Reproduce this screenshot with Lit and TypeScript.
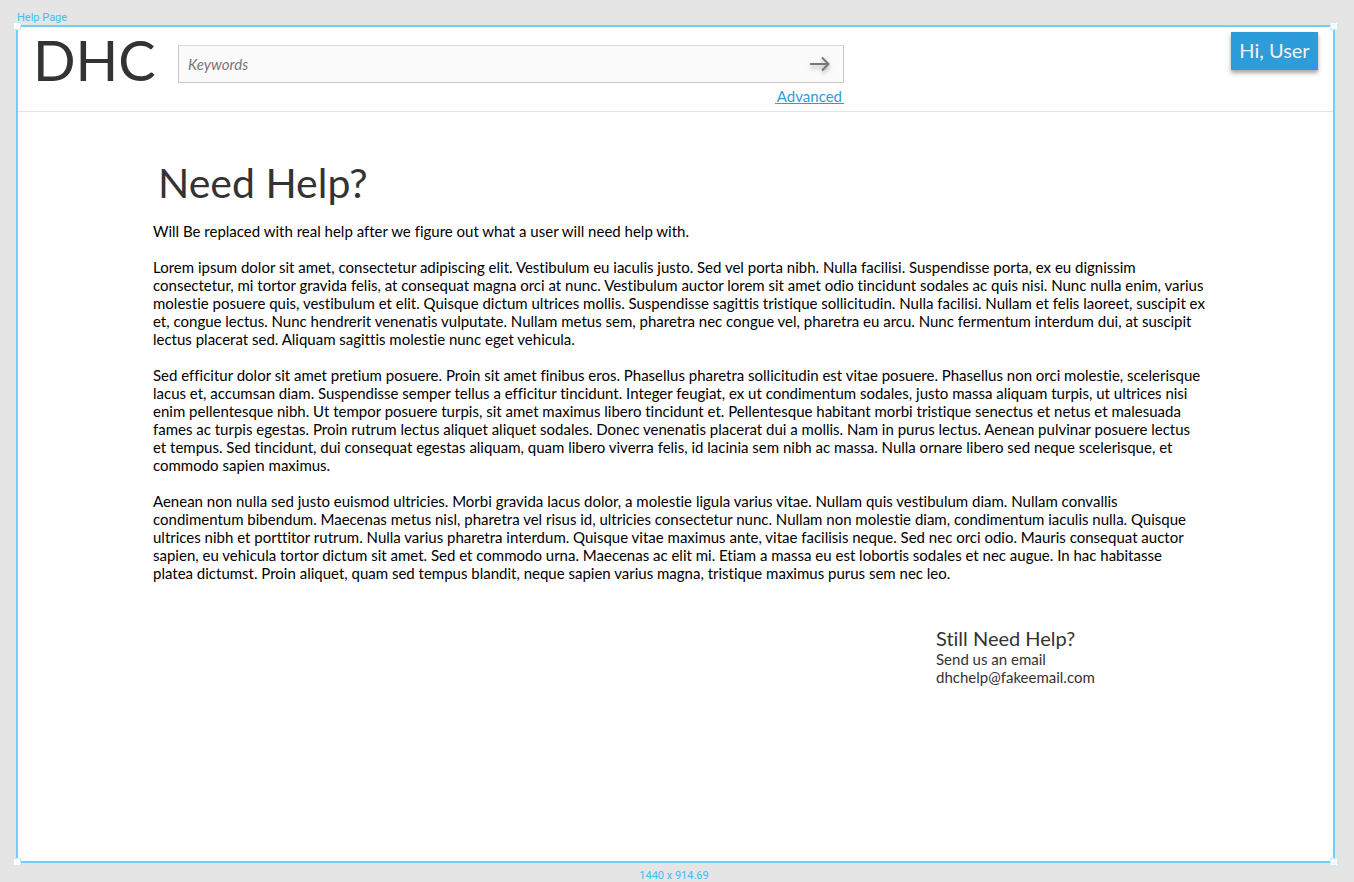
import { LitElement, html, css } from "lit";
import { customElement } from "lit/decorators.js";

const PARAGRAPHS: string[][] = [
  ["Will Be replaced with real help after we figure out what a user will need help with."],
  [
    "Lorem ipsum dolor sit amet, consectetur adipiscing elit. Vestibulum eu iaculis justo. Sed vel porta nibh. Nulla facilisi. Suspendisse porta, ex eu dignissim",
    "consectetur, mi tortor gravida felis, at consequat magna orci at nunc. Vestibulum auctor lorem sit amet odio tincidunt sodales ac quis nisi. Nunc nulla enim, varius",
    "molestie posuere quis, vestibulum et elit. Quisque dictum ultrices mollis. Suspendisse sagittis tristique sollicitudin. Nulla facilisi. Nullam et felis laoreet, suscipit ex",
    "et, congue lectus. Nunc hendrerit venenatis vulputate. Nullam metus sem, pharetra nec congue vel, pharetra eu arcu. Nunc fermentum interdum dui, at suscipit",
    "lectus placerat sed. Aliquam sagittis molestie nunc eget vehicula.",
  ],
  [
    "Sed efficitur dolor sit amet pretium posuere. Proin sit amet finibus eros. Phasellus pharetra sollicitudin est vitae posuere. Phasellus non orci molestie, scelerisque",
    "lacus et, accumsan diam. Suspendisse semper tellus a efficitur tincidunt. Integer feugiat, ex ut condimentum sodales, justo massa aliquam turpis, ut ultrices nisi",
    "enim pellentesque nibh. Ut tempor posuere turpis, sit amet maximus libero tincidunt et. Pellentesque habitant morbi tristique senectus et netus et malesuada",
    "fames ac turpis egestas. Proin rutrum lectus aliquet aliquet sodales. Donec venenatis placerat dui a mollis. Nam in purus lectus. Aenean pulvinar posuere lectus",
    "et tempus. Sed tincidunt, dui consequat egestas aliquam, quam libero viverra felis, id lacinia sem nibh ac massa. Nulla ornare libero sed neque scelerisque, et",
    "commodo sapien maximus.",
  ],
  [
    "Aenean non nulla sed justo euismod ultricies. Morbi gravida lacus dolor, a molestie ligula varius vitae. Nullam quis vestibulum diam. Nullam convallis",
    "condimentum bibendum. Maecenas metus nisl, pharetra vel risus id, ultricies consectetur nunc. Nullam non molestie diam, condimentum iaculis nulla. Quisque",
    "ultrices nibh et porttitor rutrum. Nulla varius pharetra interdum. Quisque vitae maximus ante, vitae facilisis neque. Sed nec orci odio. Mauris consequat auctor",
    "sapien, eu vehicula tortor dictum sit amet. Sed et commodo urna. Maecenas ac elit mi. Etiam a massa eu est lobortis sodales et nec augue. In hac habitasse",
    "platea dictumst. Proin aliquet, quam sed tempus blandit, neque sapien varius magna, tristique maximus purus sem nec leo.",
  ],
];

@customElement("dhc-header")
export class DhcHeader extends LitElement {
  static styles = css`
    :host {
      display: block;
      border-bottom: 1px solid #e3e3e3;
    }
    .bar {
      display: flex;
      align-items: flex-start;
      height: 84px;
      padding: 0 15px;
      box-sizing: border-box;
    }
    .logo {
      width: 145px;
      flex: none;
      color: #333;
      font-size: 56px;
      line-height: 66px;
    }
    .search {
      flex: 0 1 666px;
      display: flex;
      flex-direction: column;
      align-items: flex-end;
      margin: 0 auto 0 0;
      padding-top: 18px;
    }
    .field {
      display: flex;
      align-items: center;
      width: 100%;
      height: 38px;
      box-sizing: border-box;
      background: #fbfbfb;
      border: 1px solid #c8c8c8;
      border-top-color: #dadada;
    }
    input {
      flex: 1;
      min-width: 0;
      height: 100%;
      padding: 0 9px;
      box-sizing: border-box;
      border: 0;
      outline: 0;
      background: transparent;
      color: #333;
      font: italic 15px Lato, sans-serif;
    }
    input::placeholder {
      color: #777;
      opacity: 1;
    }
    .go {
      display: flex;
      padding: 0 12px 0 0;
      border: 0;
      background: none;
      cursor: pointer;
    }
    .go svg {
      display: block;
      overflow: visible;
      filter: drop-shadow(0 3px 2px rgba(0, 0, 0, 0.3));
    }
    .advanced {
      margin-top: 6px;
      padding: 0 2px;
      border-bottom: 1px solid #2d9cdb;
      color: #2d9cdb;
      font-size: 15px;
      line-height: 14px;
      text-decoration: none;
    }
    .user {
      flex: none;
      height: 38px;
      width: 87px;
      margin-top: 5px;
      padding: 0 0 2px;
      border: 0;
      background: #2d9cdb;
      box-shadow: 0 3px 4px rgba(0, 0, 0, 0.35);
      color: #f2f2f2;
      font: 20px Lato, sans-serif;
      cursor: pointer;
    }
  `;

  render() {
    return html`
      <header class="bar">
        <div class="logo">DHC</div>
        <form class="search" role="search" @submit=${(e: Event) => e.preventDefault()}>
          <div class="field">
            <input type="search" placeholder="Keywords" aria-label="Keywords" />
            <button class="go" type="submit" aria-label="Search">
              <svg width="22" height="16" viewBox="0 0 22 16" fill="none" stroke="#777" stroke-width="2">
                <path d="M1 8H19.5M13 1.5L19.5 8L13 14.5" />
              </svg>
            </button>
          </div>
          <a class="advanced" href="#advanced">Advanced</a>
        </form>
        <button class="user" type="button">Hi, User</button>
      </header>
    `;
  }
}

@customElement("app-root")
export class AppRoot extends LitElement {
  static styles = css`
    :host {
      display: flex;
      flex-direction: column;
      min-height: 100vh;
      box-sizing: border-box;
      padding: 10px 19px 0 16px;
      background: #e5e5e5;
      color: #000;
      font-family: Lato, sans-serif;
      font-variant-ligatures: none;
    }
    .tag {
      padding-left: 1px;
      color: #3dbdf5;
      font-family: Roboto, sans-serif;
      font-size: 11px;
      line-height: 15px;
    }
    .size {
      padding: 6px 3px 0 0;
      text-align: center;
      line-height: 13px;
    }
    .frame {
      position: relative;
      flex: 1;
      background: #fff;
      border: 2px solid #72cdf7;
    }
    .handle {
      position: absolute;
      width: 6px;
      height: 6px;
      border: 1px solid #cdeafa;
      background: #fff;
    }
    .nw { top: -5px; left: -5px; }
    .ne { top: -5px; right: -5px; }
    .sw { bottom: -5px; left: -5px; }
    .se { bottom: -5px; right: -5px; }
    .content {
      padding: 44px 135px 0;
    }
    h1 {
      margin: 0 0 12px 5px;
      color: #333;
      font-size: 41px;
      font-weight: 400;
      line-height: 54px;
    }
    p {
      margin: 0 0 18px;
      font-size: 15px;
      line-height: 18px;
      white-space: nowrap;
    }
    .contact {
      width: 262px;
      margin: 44px 0 0 auto;
      color: #333;
      font-size: 15px;
      line-height: 18px;
    }
    h2 {
      margin: 0;
      font-size: 20px;
      font-weight: 400;
      line-height: 24px;
    }
    .contact a {
      color: inherit;
      text-decoration: none;
    }
  `;

  render() {
    return html`
      <div class="tag">Help Page</div>
      <div class="frame">
        <dhc-header></dhc-header>
        <main class="content">
          <h1>Need Help?</h1>
          ${PARAGRAPHS.map(
            (lines) => html`<p>${lines.map((line, i) => (i ? html`<br />${line}` : line))}</p>`
          )}
          <section class="contact">
            <h2>Still Need Help?</h2>
            <div>Send us an email</div>
            <a href="mailto:dhchelp@fakeemail.com">dhchelp@fakeemail.com</a>
          </section>
        </main>
        <span class="handle nw"></span>
        <span class="handle ne"></span>
        <span class="handle sw"></span>
        <span class="handle se"></span>
      </div>
      <div class="tag size">1440 x 914.69</div>
    `;
  }
}
